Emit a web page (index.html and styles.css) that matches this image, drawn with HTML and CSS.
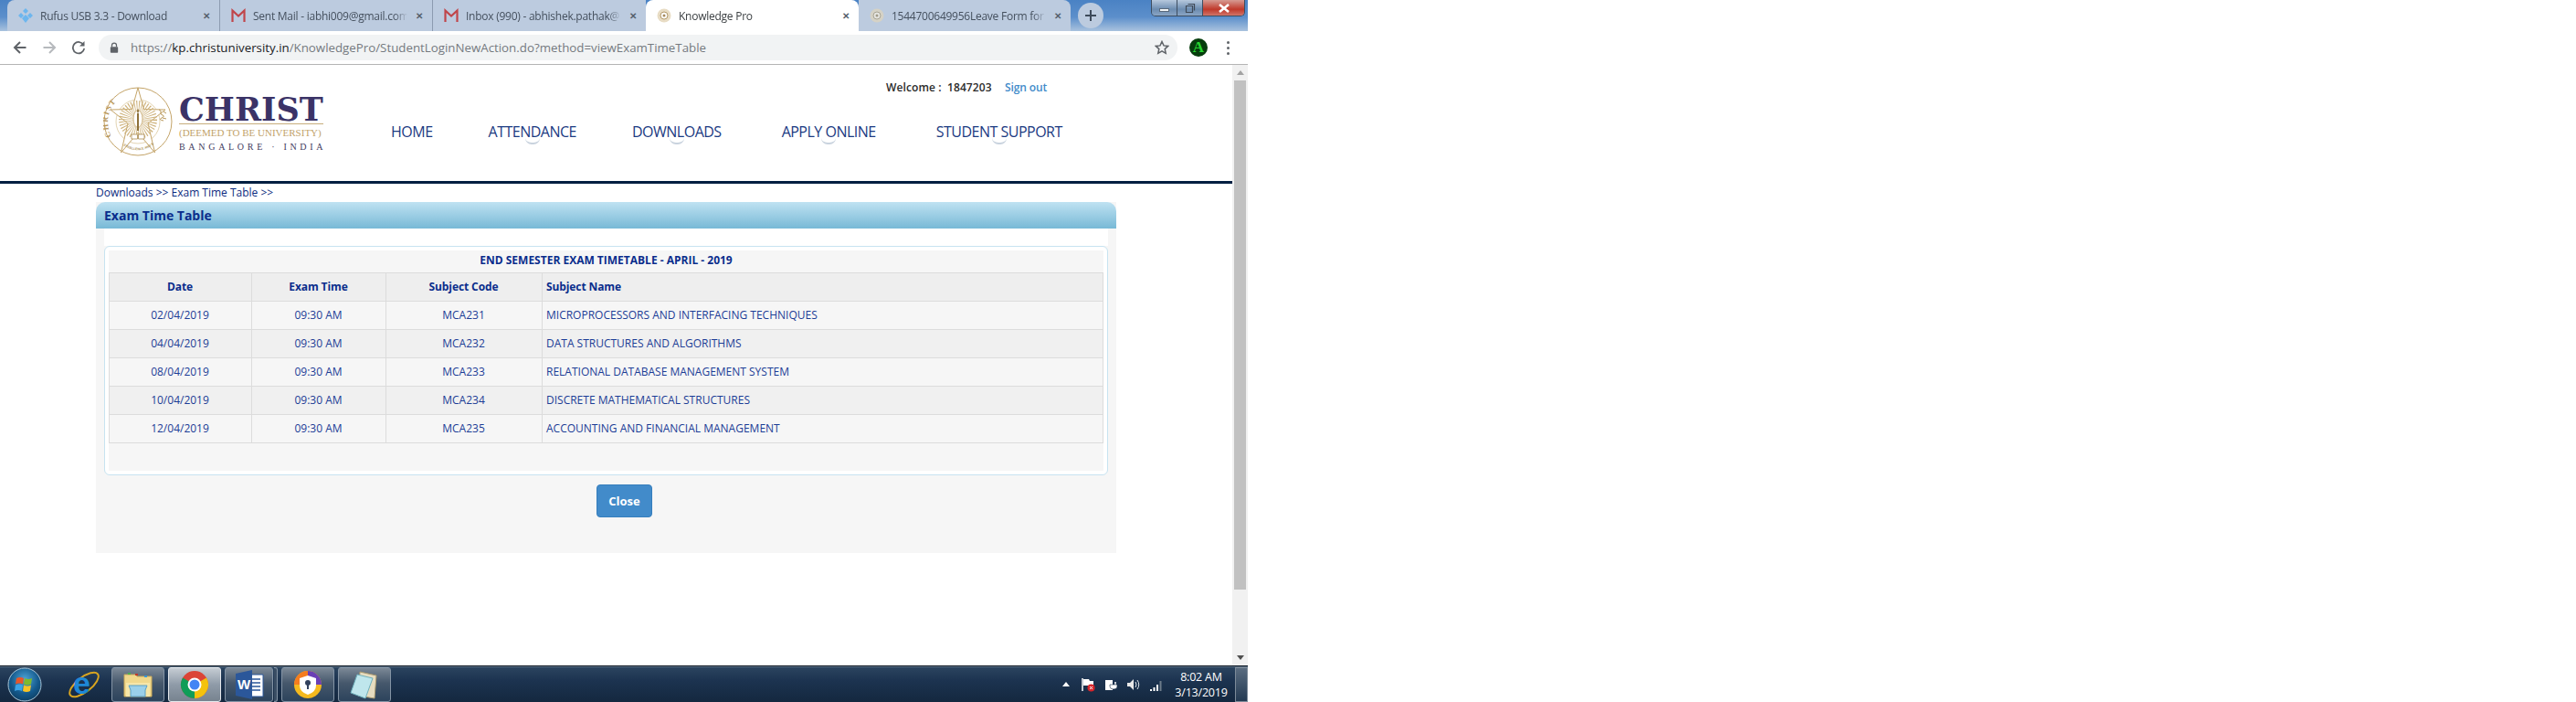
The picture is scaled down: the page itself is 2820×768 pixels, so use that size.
FILE: index.html
```html
<!DOCTYPE html>
<html lang="en">
<head>
  <meta charset="UTF-8">
  <title>Knowledge Pro</title>
  <link rel="stylesheet" href="styles.css">
</head>
<body>
<div class="screen">

  <div class="tabbar">
    <div class="tab">
      <svg class="favicon" viewBox="0 0 16 16"><path d="M8 0l3 3-3 3-3-3zM3 5l3 3-3 3-3-3zM13 5l3 3-3 3-3-3zM8 7l4 4-4 5-4-5z" fill="#6db6ee"/></svg>
      <span class="tab-title">Rufus USB 3.3 - Download</span>
      <span class="tab-close">&#10005;</span>
    </div>
    <div class="tab">
      <svg class="favicon" viewBox="0 0 16 16"><path d="M1.500 15V2.500L8 8.500l6.500-6V15" fill="none" stroke="#c0454a" stroke-width="2.200"/></svg>
      <span class="tab-title">Sent Mail - iabhi009@gmail.com</span>
      <span class="tab-close">&#10005;</span>
    </div>
    <div class="tab">
      <svg class="favicon" viewBox="0 0 16 16"><path d="M1.500 15V2.500L8 8.500l6.500-6V15" fill="none" stroke="#c0454a" stroke-width="2.200"/></svg>
      <span class="tab-title">Inbox (990) - abhishek.pathak@</span>
      <span class="tab-close">&#10005;</span>
    </div>
    <div class="tab tab-active">
      <svg class="favicon" viewBox="0 0 16 16"><circle cx="8" cy="8" r="7.500" fill="#e8dcc4"/><circle cx="8" cy="8" r="4" fill="#fff" stroke="#b49a6a"/><circle cx="8" cy="8" r="1.500" fill="#a58a5c"/></svg>
      <span class="tab-title">Knowledge Pro</span>
      <span class="tab-close">&#10005;</span>
    </div>
    <div class="tab">
      <svg class="favicon" viewBox="0 0 16 16"><circle cx="8" cy="8" r="7.500" fill="#d5d2c6"/><circle cx="8" cy="8" r="4" fill="#e6e6e2" stroke="#a9a594"/><circle cx="8" cy="8" r="1.500" fill="#a09a88"/></svg>
      <span class="tab-title">1544700649956Leave Form for C</span>
      <span class="tab-close">&#10005;</span>
    </div>
    <div class="newtab">
      <svg viewBox="0 0 14 14" width="14" height="14"><path d="M7 1v12M1 7h12" stroke="#3d4a5a" stroke-width="2"/></svg>
    </div>
    <div class="wincontrols">
      <div class="win-btn win-min"><span></span></div>
      <div class="win-btn win-max">
        <svg viewBox="0 0 12 12" width="12" height="12"><path d="M3.500 1.500h7v7M1.500 3.500h7v7h-7z" fill="none" stroke="#3f4a58" stroke-width="1.200"/></svg>
      </div>
      <div class="win-btn win-close">
        <svg viewBox="0 0 14 10" width="14" height="10"><path d="M2 1l10 8M12 1L2 9" stroke="#fff" stroke-width="2.600"/></svg>
      </div>
    </div>
  </div>

  <div class="toolbar">
    <svg class="tool" viewBox="0 0 16 16"><path d="M14.500 8h-12M8 2L2 8l6 6" fill="none" stroke="#5f6368" stroke-width="2"/></svg>
    <svg class="tool" viewBox="0 0 16 16"><path d="M1.500 8h12M8 2l6 6-6 6" fill="none" stroke="#b6b9bd" stroke-width="2"/></svg>
    <svg class="tool" viewBox="0 0 16 16"><path d="M13.500 5.200A6.200 6.200 0 1 0 14.200 9" fill="none" stroke="#5f6368" stroke-width="1.800"/><path d="M14.500 1v5.500H9z" fill="#5f6368"/></svg>
    <div class="omnibox">
      <svg class="lock" viewBox="0 0 12 14"><path d="M3 6V4a3 3 0 0 1 6 0v2" fill="none" stroke="#5f6368" stroke-width="1.500"/><rect x="1" y="6" width="10" height="8" rx="1" fill="#5f6368"/></svg>
      <span class="url">https://<b>kp.christuniversity.in</b>/KnowledgePro/StudentLoginNewAction.do?method=viewExamTimeTable</span>
      <svg class="star" viewBox="0 0 16 16"><path d="M8 1.500l2 4.400 4.700.5-3.500 3.200 1 4.700L8 11.900l-4.200 2.400 1-4.700L1.300 6.400 6 5.900z" fill="none" stroke="#5f6368" stroke-width="1.500"/></svg>
    </div>
    <div class="avatar">A</div>
    <div class="menu-dots"><i></i><i></i><i></i></div>
  </div>

  <div class="viewport">
    <div class="page">
      <header class="site-head">
        <div class="logo">
          <svg class="crest" viewBox="0 0 76 76">
            <defs>
              <path id="crest-arc" d="M9 54A32 32 0 0 1 32 7"/>
              <path id="crest-motto" d="M20 62A26 26 0 0 0 56 62"/>
            </defs>
            <circle cx="38" cy="38" r="37" fill="#fff" stroke="#c4a468" stroke-width="1"/>
            <circle cx="38" cy="38" r="24" fill="none" stroke="#d6c08f" stroke-width=".7"/>
            <path d="M38 1l6.500 23.500L68 25 49 40l7.500 32L38 50 19.500 72 27 40 8 25l23.500-.5z" fill="#fff" stroke="#c4a468" stroke-width="1"/>
            <circle cx="38" cy="36" r="11" fill="none" stroke="#cfb47e" stroke-width="20" stroke-dasharray=".7 1.100"/>
            <ellipse cx="38" cy="35" rx="5" ry="9.500" fill="#fff" stroke="#c4a468" stroke-width=".8"/>
            <path d="M38 29v19" stroke="#8d7038" stroke-width="2"/>
            <path d="M38 24q2 2.500 0 5-2-2.500 0-5z" fill="#8d7038"/>
            <path d="M31 52h6.500v5H31zM38.500 52H45v5h-6.500z" fill="#fff" stroke="#a98c52" stroke-width=".8"/>
            <text class="crest-text"><textPath href="#crest-arc">CHRIST</textPath></text>
            <text class="crest-motto"><textPath href="#crest-motto" startOffset="3">EXCELLENCE AND SERVICE</textPath></text>
            <path d="M61 25q3 1 2 3t2 3-1 3 2 3M66 27l3 2M65 34l4 1" fill="none" stroke="#b8975a" stroke-width="1"/>
          </svg>
          <div class="wordmark">
            <div class="wm-name">CHRIST</div>
            <div class="wm-deemed">(DEEMED TO BE UNIVERSITY)</div>
            <div class="wm-place">BANGALORE &middot; INDIA</div>
          </div>
        </div>
        <div class="head-right">
          <div class="userbar">
            <span class="welcome">Welcome :&nbsp; 1847203</span>
            <a class="signout" href="#">Sign out</a>
          </div>
          <nav class="mainnav">
            <a href="#">HOME</a>
            <a href="#" class="has-sub">ATTENDANCE</a>
            <a href="#" class="has-sub">DOWNLOADS</a>
            <a href="#" class="has-sub nav-wide">APPLY ONLINE</a>
            <a href="#" class="has-sub nav-wide">STUDENT SUPPORT</a>
          </nav>
        </div>
      </header>

      <main class="content">
        <div class="breadcrumb">Downloads &gt;&gt; Exam Time Table &gt;&gt;</div>
        <section class="panel">
          <h2 class="panel-title">Exam Time Table</h2>
          <div class="panel-body">
            <div class="panel-gap"></div>
            <div class="inner-box">
              <div class="inner-fill">
                <div class="table-title">END SEMESTER EXAM TIMETABLE - APRIL - 2019</div>
                <table class="exam-table">
                  <colgroup>
                    <col class="col-date"><col class="col-time"><col class="col-code"><col>
                  </colgroup>
                  <thead>
                    <tr><th>Date</th><th>Exam Time</th><th>Subject Code</th><th class="name">Subject Name</th></tr>
                  </thead>
                  <tbody>
                    <tr><td>02/04/2019</td><td>09:30 AM</td><td>MCA231</td><td class="name">MICROPROCESSORS AND INTERFACING TECHNIQUES</td></tr>
                    <tr><td>04/04/2019</td><td>09:30 AM</td><td>MCA232</td><td class="name">DATA STRUCTURES AND ALGORITHMS</td></tr>
                    <tr><td>08/04/2019</td><td>09:30 AM</td><td>MCA233</td><td class="name">RELATIONAL DATABASE MANAGEMENT SYSTEM</td></tr>
                    <tr><td>10/04/2019</td><td>09:30 AM</td><td>MCA234</td><td class="name">DISCRETE MATHEMATICAL STRUCTURES</td></tr>
                    <tr><td>12/04/2019</td><td>09:30 AM</td><td>MCA235</td><td class="name">ACCOUNTING AND FINANCIAL MANAGEMENT</td></tr>
                  </tbody>
                </table>
              </div>
            </div>
            <div class="actions"><button class="btn-close" type="button">Close</button></div>
          </div>
        </section>
      </main>
    </div>
    <div class="scrollbar">
      <div class="sb-arrow sb-up"></div>
      <div class="sb-track"><div class="sb-thumb"></div></div>
      <div class="sb-arrow sb-down"></div>
    </div>
  </div>

  <div class="taskbar">
    <div class="orb">
      <svg viewBox="0 0 38 38" width="38" height="38">
        <defs><radialGradient id="orb-fill" cx="50%" cy="35%" r="70%"><stop offset="0" stop-color="#4fa6d8"/><stop offset=".6" stop-color="#14598c"/><stop offset="1" stop-color="#0d3c5e"/></radialGradient></defs>
        <circle cx="19" cy="19" r="18" fill="url(#orb-fill)" stroke="#a7c4d6" stroke-width="1"/>
        <path d="M10 12q4-2 8 0l-1 6.500q-4-2-8 0z" fill="#e8562a"/>
        <path d="M19 12q4 2 8 0l-1 6.500q-4 2-8 0z" fill="#7fba2c"/>
        <path d="M9 19.500q4-2 8 0l-1 6.500q-4-2-8 0z" fill="#3ba4e6"/>
        <path d="M18 19.500q4 2 8 0l-1 6.500q-4 2-8 0z" fill="#f7c325"/>
      </svg>
    </div>
    <div class="pin pin-plain">
      <svg viewBox="0 0 34 34" width="34" height="34">
        <ellipse cx="17" cy="17" rx="19" ry="8" transform="rotate(-38 17 17)" fill="none" stroke="#d9a520" stroke-width="2"/>
        <text class="ie-e" x="5" y="27">e</text>
      </svg>
    </div>
    <div class="pin">
      <svg viewBox="0 0 34 34" width="34" height="34">
        <path d="M2 6h12l2 2h16v22H2z" fill="#f0d88c" stroke="#c7a85a"/>
        <rect x="6" y="4" width="3" height="2" fill="#4caf50"/><rect x="14" y="5" width="3" height="2" fill="#c0392b"/><rect x="24" y="7" width="3" height="2" fill="#3498db"/>
        <path d="M4 15h26v15H4z" fill="#f6e6a8"/>
        <path d="M7 18h20l-2 5v7H9v-7z" fill="#9ad0ea" stroke="#5a9fc4"/>
      </svg>
    </div>
    <div class="pin pin-active">
      <svg viewBox="0 0 32 32" width="32" height="32">
        <circle cx="16" cy="16" r="15" fill="#db4437"/>
        <path d="M16 16L29 8.500A15 15 0 0 1 16 31z" fill="#f4c20d"/>
        <path d="M16 16L16 31A15 15 0 0 1 3 8.500z" fill="#0f9d58"/>
        <circle cx="16" cy="16" r="7.500" fill="#fff"/><circle cx="16" cy="16" r="5.500" fill="#4285f4"/>
      </svg>
    </div>
    <div class="pin pin-word">
      <svg viewBox="0 0 34 34" width="34" height="34">
        <path d="M16 6h16v24H16z" fill="#fff" stroke="#2b579a"/>
        <path d="M19 11h10M19 15h10M19 19h10M19 23h10" stroke="#2b579a" stroke-width="1.500"/>
        <path d="M2 5L20 1v32L2 29z" fill="#2b579a"/>
        <text class="word-w" x="4" y="22">W</text>
      </svg>
    </div>
    <div class="pin-stub"></div>
    <div class="pin">
      <svg viewBox="0 0 32 32" width="32" height="32">
        <circle cx="16" cy="16" r="15" fill="#f5b91e"/>
        <path d="M16 1A15 15 0 0 1 31 16L16 16z" fill="#6a3fb5"/>
        <path d="M1 16A15 15 0 0 1 16 1L16 16z" fill="#f57c1f"/>
        <path d="M16 6l9 3v8q0 7-9 10-9-3-9-10V9z" fill="#fff"/>
        <circle cx="16" cy="14" r="3" fill="#33415c"/><path d="M15 15h2v6h-2z" fill="#33415c"/>
      </svg>
    </div>
    <div class="pin">
      <svg viewBox="0 0 34 34" width="34" height="34">
        <path d="M12 3l18 4-2 25-18-3z" fill="#e6dcc0" stroke="#a8986e"/>
        <path d="M9 6l17 4-8 22L2 26z" fill="#bfe6ec" stroke="#6fb0bc"/>
      </svg>
    </div>
    <div class="tray">
      <svg class="tray-up" viewBox="0 0 8 5" width="8" height="5"><path d="M0 5l4-5 4 5z" fill="#fff"/></svg>
      <svg viewBox="0 0 16 16" width="16" height="16"><path d="M2 1v14" stroke="#fff" stroke-width="1.500"/><path d="M3 2h6l1 2h4v7H9L8 9H3z" fill="#fff"/><circle cx="11.500" cy="11.500" r="4" fill="#d8262c"/><path d="M10 10l3 3m0-3l-3 3" stroke="#fff"/></svg>
      <svg viewBox="0 0 16 16" width="16" height="16"><path d="M2 3h8v11H2z" fill="#fff"/><path d="M9 5v3M13 5v3" stroke="#fff" stroke-width="1.500"/><path d="M7 8h8v2q0 3-4 3t-4-3z" fill="#fff" stroke="#1a3048" stroke-width=".6"/></svg>
      <svg viewBox="0 0 16 16" width="16" height="16"><path d="M1 6h3l4-4v12l-4-4H1z" fill="#e8e8e8"/><path d="M10 5q2 3 0 6M12 3q3.500 5 0 10" fill="none" stroke="#dfe6ec" stroke-width="1"/></svg>
      <svg viewBox="0 0 16 16" width="16" height="16"><path d="M1 13h2v2H1zM4.500 11h2v4h-2zM8 8h2v7H8z" fill="#fff"/><path d="M11.500 4h2v11h-2z" fill="#6d7c8a"/></svg>
    </div>
    <div class="clock"><div>8:02 AM</div><div>3/13/2019</div></div>
    <div class="show-desktop"></div>
  </div>

</div>
</body>
</html>
```

FILE: styles.css
```css
* {
  box-sizing: border-box;
}

body {
  margin: 0;
  background-color: #ffffff;
  font-family: "Open Sans", sans-serif;
}

.screen {
  width: 1366px;
  height: 768px;
  display: flex;
  flex-direction: column;
  overflow: hidden;
}

/* tab strip */
.tabbar {
  height: 34px;
  flex: none;
  display: flex;
  align-items: flex-end;
  padding-left: 8px;
  background: linear-gradient(to bottom, #4a82c4 0%, #5c8fcb 55%, #a9c2de 100%);
  position: relative;
}

.tab {
  width: 233px;
  height: 34px;
  flex: none;
  display: flex;
  align-items: center;
  padding: 0 7px 0 12px;
  background-color: #bccbdf;
  border-right: 1px solid #8c9bb0;
  font-size: 12px;
  letter-spacing: -0.25px;
  color: #45505e;
}

.tab:first-child {
  border-top-left-radius: 8px;
}

.tab:nth-child(3) {
  border-right: 0;
}

.tab-active {
  background-color: #ffffff;
  border-right: 0;
  border-radius: 8px 8px 0 0;
  color: #3c4043;
}

.tab:nth-child(5) {
  border-right: 0;
  border-top-right-radius: 8px;
  width: 232px;
}

.favicon {
  width: 16px;
  height: 16px;
  flex: none;
  margin-right: 8px;
}

.tab-title {
  flex: 1;
  white-space: nowrap;
  overflow: hidden;
  min-width: 0;
  -webkit-mask-image: linear-gradient(to right, #000 calc(100% - 14px), transparent);
  mask-image: linear-gradient(to right, #000 calc(100% - 14px), transparent);
}

.tab-close {
  flex: none;
  width: 14px;
  margin-left: 6px;
  font-size: 10px;
  font-weight: bold;
  text-align: center;
  color: #55606c;
}

.newtab {
  width: 28px;
  height: 28px;
  margin: 0 0 3px 8px;
  border-radius: 50%;
  background-color: #bccbdf;
  display: flex;
  align-items: center;
  justify-content: center;
}

.wincontrols {
  position: absolute;
  top: 0;
  right: 3px;
  width: 103px;
  height: 18px;
  display: flex;
  border: 1px solid #3d4d60;
  border-top: 0;
  border-radius: 0 0 5px 5px;
  overflow: hidden;
}

.win-btn {
  display: flex;
  align-items: center;
  justify-content: center;
  border-right: 1px solid #3d4d60;
}

.win-min,
.win-max {
  width: 28px;
  background: linear-gradient(to bottom, #b6c8dd, #6c8cb0 60%, #8aa5c4);
}

.win-min span {
  width: 11px;
  height: 4px;
  margin-top: 4px;
  background-color: #f2f4f6;
  border: 1px solid #5a6a7c;
}

.win-close {
  flex: 1;
  border-right: 0;
  background: linear-gradient(to bottom, #d69a92, #c0392b 60%, #d0756a);
}

/* address bar row */
.toolbar {
  height: 37px;
  flex: none;
  display: flex;
  align-items: center;
  padding-left: 14px;
  background-color: #ffffff;
  border-bottom: 1px solid #b4b4b4;
}

.tool {
  width: 16px;
  height: 16px;
  flex: none;
  margin-right: 16px;
}

.omnibox {
  width: 1181px;
  height: 28px;
  margin-left: -2px;
  display: flex;
  align-items: center;
  padding: 0 9px 0 12px;
  background-color: #f1f3f4;
  border-radius: 14px;
}

.lock {
  width: 10px;
  height: 12px;
  flex: none;
  margin-right: 13px;
}

.url {
  flex: 1;
  font-size: 13.300px;
  color: #757a80;
  white-space: nowrap;
}

.url b {
  font-weight: normal;
  color: #202124;
}

.star {
  width: 16px;
  height: 16px;
  flex: none;
}

.avatar {
  width: 20px;
  height: 20px;
  margin-left: 13px;
  border-radius: 50%;
  background-color: #063d0c;
  color: #25d52f;
  font-family: "Liberation Serif", serif;
  font-weight: bold;
  font-size: 17px;
  line-height: 20px;
  text-align: center;
}

.menu-dots {
  margin-left: 21px;
  display: flex;
  flex-direction: column;
  gap: 3px;
}

.menu-dots i {
  width: 3px;
  height: 3px;
  border-radius: 50%;
  background-color: #5f6368;
}

/* page area */
.viewport {
  flex: 1;
  min-height: 0;
  display: flex;
  background-color: #ffffff;
}

.page {
  flex: 1;
  min-width: 0;
}

.scrollbar {
  width: 17px;
  flex: none;
  display: flex;
  flex-direction: column;
  background-color: #f1f1f1;
}

.sb-arrow {
  height: 17px;
  display: flex;
  align-items: center;
  justify-content: center;
}

.sb-arrow::before {
  content: "";
  border-left: 4px solid transparent;
  border-right: 4px solid transparent;
}

.sb-up::before {
  border-bottom: 5px solid #a3a3a3;
}

.sb-down::before {
  border-top: 5px solid #505050;
}

.sb-track {
  flex: 1;
  padding: 0 2px;
}

.sb-thumb {
  height: 557px;
  background-color: #c1c1c1;
}

.site-head {
  height: 130px;
  display: flex;
  padding-left: 113px;
  border-bottom: 3px solid #011f41;
}

.logo {
  display: flex;
  align-items: flex-start;
  padding-top: 24px;
  width: 315px;
  flex: none;
}

.crest {
  width: 76px;
  height: 76px;
  flex: none;
}

.crest-text {
  font-family: "Liberation Serif", serif;
  font-size: 8.500px;
  font-weight: bold;
  letter-spacing: 1.500px;
  fill: #b8975a;
}

.crest-motto {
  font-family: "Liberation Sans", sans-serif;
  font-size: 3.500px;
  font-weight: bold;
  fill: #a98c52;
}

.wordmark {
  margin-left: 7px;
  width: 158px;
  padding-top: 9px;
  font-family: "Liberation Serif", serif;
}

.wm-name {
  font-family: "DejaVu Serif", serif;
  font-size: 35px;
  line-height: 31px;
  font-weight: bold;
  color: #3b3367;
  white-space: nowrap;
  border-bottom: 1px solid #c7ae7c;
}

.wm-deemed {
  font-size: 11px;
  line-height: 13px;
  margin-top: 3px;
  color: #c2a36a;
  white-space: nowrap;
}

.wm-place {
  font-size: 10px;
  line-height: 12px;
  margin-top: 3px;
  letter-spacing: 3.700px;
  color: #3f3a5e;
  white-space: nowrap;
}

.head-right {
  flex: 1;
  min-width: 0;
}

.userbar {
  height: 48px;
  padding: 16px 0 0 542px;
  font-size: 12px;
  line-height: 17px;
  font-weight: 600;
  letter-spacing: 0.1px;
  white-space: nowrap;
}

.welcome {
  color: #2b2b2b;
}

.signout {
  margin-left: 11px;
  letter-spacing: -0.1px;
  color: #428bca;
  text-decoration: none;
}

.mainnav {
  display: flex;
  gap: 61px;
  height: 50px;
}

.mainnav a {
  position: relative;
  font-size: 16px;
  line-height: 50px;
  color: #1b3a82;
  text-decoration: none;
  white-space: nowrap;
  letter-spacing: -0.5px;
}

.mainnav .nav-wide {
  margin-left: 5px;
}

.mainnav .has-sub::after {
  content: "";
  position: absolute;
  left: 50%;
  bottom: 11px;
  width: 16px;
  height: 5px;
  margin-left: -8px;
  border-bottom: 2px solid #c9d3de;
  border-radius: 0 0 10px 10px;
}

.content {
  padding: 2px 0 0 105px;
  width: 1222px;
}

.breadcrumb {
  font-size: 12px;
  line-height: 16px;
  color: #0c2b80;
  height: 18px;
}

.panel {
  background-color: #f6f6f6;
}

.panel-title {
  margin: 0;
  height: 29px;
  padding-left: 9px;
  font-size: 14px;
  line-height: 29px;
  font-weight: 700;
  color: #0a2d8c;
  border-radius: 10px 10px 0 0;
  background: linear-gradient(to bottom, #bfe2f2, #78b9d6);
}

.panel-body {
  height: 355px;
  padding: 0 9px;
}

.panel-gap {
  height: 19px;
  background-color: #ffffff;
}

.inner-box {
  height: 251px;
  border: 1px solid #c7e3f1;
  border-radius: 6px;
  background-color: #ffffff;
  padding: 4px;
}

.inner-fill {
  height: 241px;
  background-color: #f6f6f6;
}

.table-title {
  height: 24px;
  font-size: 12px;
  line-height: 22px;
  font-weight: 700;
  text-align: center;
  color: #0a2d8c;
}

.exam-table {
  width: 100%;
  table-layout: fixed;
  border-collapse: collapse;
  font-size: 12px;
  color: #1c3d96;
}

.col-date {
  width: 156px;
}

.col-time {
  width: 147px;
}

.col-code {
  width: 171px;
}

.exam-table th,
.exam-table td {
  height: 31px;
  border: 1px solid #dcdcdc;
  text-align: center;
  padding: 0 5px 2px 4px;
}

.exam-table th {
  font-weight: 700;
  letter-spacing: -0.1px;
  color: #0a2d8c;
  background-color: #eeeeee;
}

.exam-table .name {
  text-align: left;
}

.exam-table tbody tr:nth-child(even) {
  background-color: #f0f0f0;
}

.actions {
  padding: 10px 0 0 40px;
  display: flex;
  justify-content: center;
}

.btn-close {
  width: 61px;
  height: 36px;
  padding: 0;
  border: 1px solid #357ebd;
  border-radius: 4px;
  background-color: #428bca;
  color: #ffffff;
  font-family: "Open Sans", sans-serif;
  font-size: 13px;
  font-weight: 700;
}

/* windows taskbar */
.taskbar {
  height: 40px;
  flex: none;
  display: flex;
  align-items: center;
  border-top: 1px solid #0a1420;
  box-shadow: inset 0 1px 0 #5d7186;
  background: linear-gradient(to bottom, #2c4560 0%, #1c3350 40%, #14283f 100%);
  padding-left: 8px;
}

.orb {
  width: 38px;
  height: 38px;
  flex: none;
  margin-right: 25px;
}

.pin {
  width: 58px;
  height: 38px;
  flex: none;
  margin-right: 4px;
  display: flex;
  align-items: center;
  justify-content: center;
  border: 1px solid #8494a5;
  border-radius: 3px;
  background: linear-gradient(to bottom, #7b8896 0%, #46586c 45%, #2c435c 100%);
}

.pin-plain {
  width: 46px;
  margin-left: -2px;
  margin-right: 7px;
  border: 0;
  background: none;
}

.pin-active {
  background: linear-gradient(to bottom, #c5ccd3 0%, #8f9ba8 50%, #77838f 100%);
  border-color: #e4e8ec;
}

.pin-word {
  width: 53px;
  margin-right: 1px;
}

.pin-stub {
  width: 4px;
  height: 38px;
  flex: none;
  margin-right: 4px;
  border: 1px solid #8494a5;
  border-left: 0;
  border-radius: 0 3px 3px 0;
  background-color: #3a4e64;
}

.ie-e {
  font-family: "Liberation Sans", sans-serif;
  font-size: 34px;
  font-weight: bold;
  fill: #1e88d8;
}

.word-w {
  font-family: "Liberation Sans", sans-serif;
  font-size: 15px;
  font-weight: bold;
  fill: #ffffff;
}

.tray {
  margin-left: auto;
  display: flex;
  align-items: center;
  gap: 9px;
}

.tray-up {
  margin-right: 3px;
}

.clock {
  width: 62px;
  margin-left: 10px;
  font-size: 12.500px;
  line-height: 17px;
  text-align: center;
  letter-spacing: -0.2px;
  color: #ffffff;
}

.show-desktop {
  width: 14px;
  height: 38px;
  margin-left: 6px;
  flex: none;
  border: 1px solid #7d8b99;
  background: linear-gradient(to bottom, #5a6c80, #243a52);
}
```
